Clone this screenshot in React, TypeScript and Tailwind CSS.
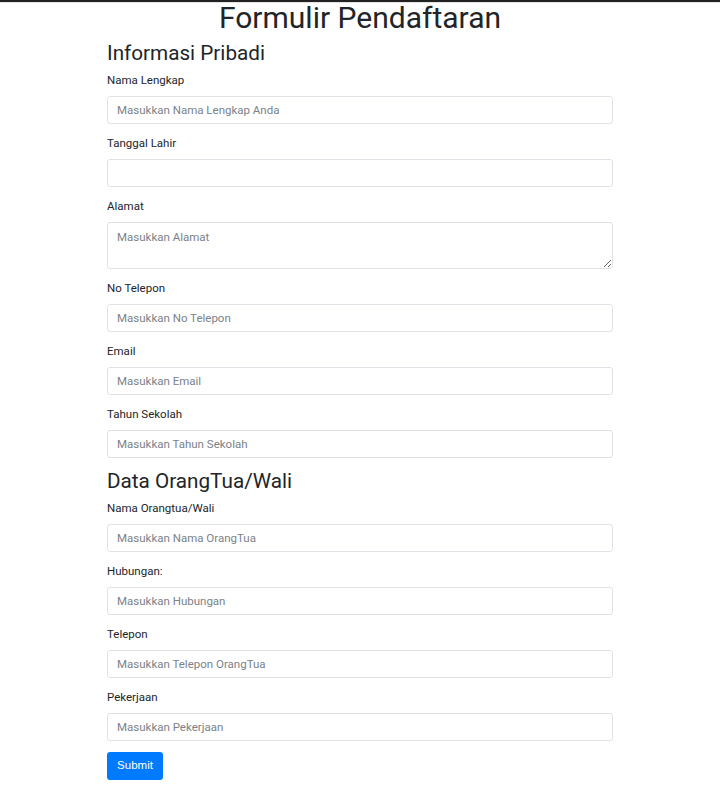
import React from 'react'

const pribadi = [
  { label: 'Nama Lengkap', placeholder: 'Masukkan Nama Lengkap Anda' },
  { label: 'Tanggal Lahir', placeholder: '' },
  { label: 'Alamat', placeholder: 'Masukkan Alamat', area: true },
  { label: 'No Telepon', placeholder: 'Masukkan No Telepon' },
  { label: 'Email', placeholder: 'Masukkan Email' },
  { label: 'Tahun Sekolah', placeholder: 'Masukkan Tahun Sekolah' },
]

const orangTua = [
  { label: 'Nama Orangtua/Wali', placeholder: 'Masukkan Nama OrangTua' },
  { label: 'Hubungan:', placeholder: 'Masukkan Hubungan' },
  { label: 'Telepon', placeholder: 'Masukkan Telepon OrangTua' },
  { label: 'Pekerjaan', placeholder: 'Masukkan Pekerjaan' },
]

type Field = { label: string; placeholder: string; area?: boolean }

const inputCls =
  'block w-full rounded-[3px] border border-[#dfe2e6] bg-white px-[9px] text-[11.5px] text-[#495057] placeholder:text-[#7b8288] outline-none'

function FormGroup({ field }: { field: Field }) {
  return (
    <div className="mb-[11px]">
      <label className="mb-[7px] block text-[11.5px] leading-[17px] text-[#212529]">
        {field.label}
      </label>
      {field.area ? (
        <textarea
          placeholder={field.placeholder}
          className={`${inputCls} h-[47px] pt-[6px] leading-[17px]`}
        />
      ) : (
        <input
          type="text"
          placeholder={field.placeholder}
          className={`${inputCls} h-[28px]`}
        />
      )}
    </div>
  )
}

export default function App() {
  return (
    <div
      className="min-h-[790px] bg-white"
      style={{ fontFamily: 'Roboto, "Noto Sans", sans-serif' }}
    >
      {/* browser shadow strip */}
      <div className="h-[2px] bg-[#222]" />
      <div className="h-px bg-[#e4e4e4]" />

      <h1 className="-mt-[3px] mb-[4px] text-center text-[30px] leading-[36px] text-[#212529]">
        Formulir Pendaftaran
      </h1>

      <form className="mx-auto w-[506px]">
        <h3 className="mb-[5px] text-[20.7px] leading-[27px] text-[#212529]">
          Informasi Pribadi
        </h3>
        {pribadi.map((f) => (
          <FormGroup key={f.label} field={f} />
        ))}

        <h3 className="mb-[6px] text-[20.7px] leading-[25px] text-[#212529]">
          Data OrangTua/Wali
        </h3>
        {orangTua.map((f) => (
          <FormGroup key={f.label} field={f} />
        ))}

        <button
          type="button"
          className="h-[28px] w-[56px] rounded-[3px] bg-[#007bff] text-[11.5px] text-white"
          style={{ fontFamily: '"Liberation Sans", Arial, sans-serif' }}
        >
          Submit
        </button>
      </form>
    </div>
  )
}
